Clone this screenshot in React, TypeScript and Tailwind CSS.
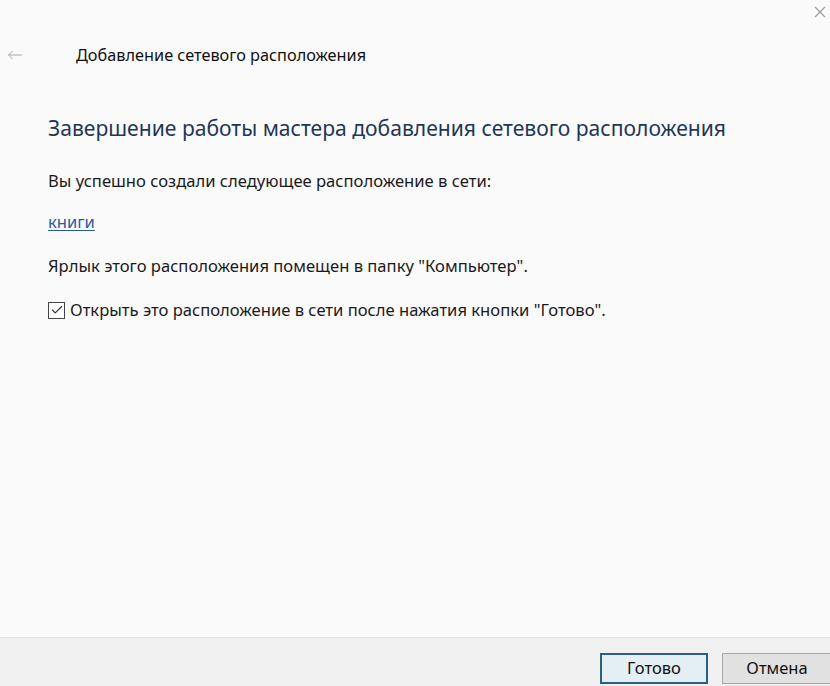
import { Check } from "lucide-react";

export default function App() {
  return (
    <div
      className="flex h-[686px] w-[830px] flex-col overflow-hidden bg-[#fbfafb] text-[#1a1a1a]"
      style={{ fontFamily: '"Noto Sans", "Open Sans", sans-serif' }}
    >
      {/* title bar */}
      <div className="flex h-[38px] justify-end pr-[4px] pt-[4px]">
        <svg width="12" height="12" viewBox="0 0 12 12" className="mt-[2px]">
          <path d="M1 1L11 11M11 1L1 11" stroke="#9a9a9a" strokeWidth="1.2" />
        </svg>
      </div>

      {/* header */}
      <div className="flex items-center">
        <svg width="16" height="10" viewBox="0 0 16 10" className="ml-[7px]">
          <path d="M15 5H1.5M5.5 1L1.5 5L5.5 9" stroke="#a8a8a8" strokeWidth="1" fill="none" />
        </svg>
        <span className="ml-[53px] text-[16.3px] leading-[34px] text-[#111]">
          Добавление сетевого расположения
        </span>
      </div>

      {/* content */}
      <div className="flex flex-1 flex-col pl-[48px]">
        <h1 className="mt-[40px] text-[21.1px] leading-[32px] text-[#1f3656]">
          Завершение работы мастера добавления сетевого расположения
        </h1>
        <p className="mt-[27px] text-[16.6px] leading-[20px]">
          Вы успешно создали следующее расположение в сети:
        </p>
        <a className="mt-[21px] w-fit text-[16.6px] leading-[20px] text-[#2a5a9e] underline underline-offset-2">
          книги
        </a>
        <p className="mt-[24px] text-[16.6px] leading-[20px]">
          Ярлык этого расположения помещен в папку "Компьютер".
        </p>
        <label className="mt-[24px] flex items-center gap-[5px] text-[16.6px] leading-[20px]">
          <span className="flex h-[17px] w-[17px] items-center justify-center border border-[#444] bg-white">
            <Check size={14} strokeWidth={2} className="text-[#333]" />
          </span>
          Открыть это расположение в сети после нажатия кнопки "Готово".
        </label>
      </div>

      {/* footer */}
      <div className="flex h-[49px] items-start justify-end gap-[14px] border-t border-[#e2e2e2] bg-[#f0f0f0] pt-[15px]">
        <button className="h-[31px] w-[108px] border-2 border-[#2b5f7e] bg-[#e3eef5] text-[16.5px] text-[#111]">
          Готово
        </button>
        <button className="-mr-[2px] h-[31px] w-[110px] border border-[#a8a8a8] bg-[#e1e1e1] text-[16.5px] text-[#111]">
          Отмена
        </button>
      </div>
    </div>
  );
}
